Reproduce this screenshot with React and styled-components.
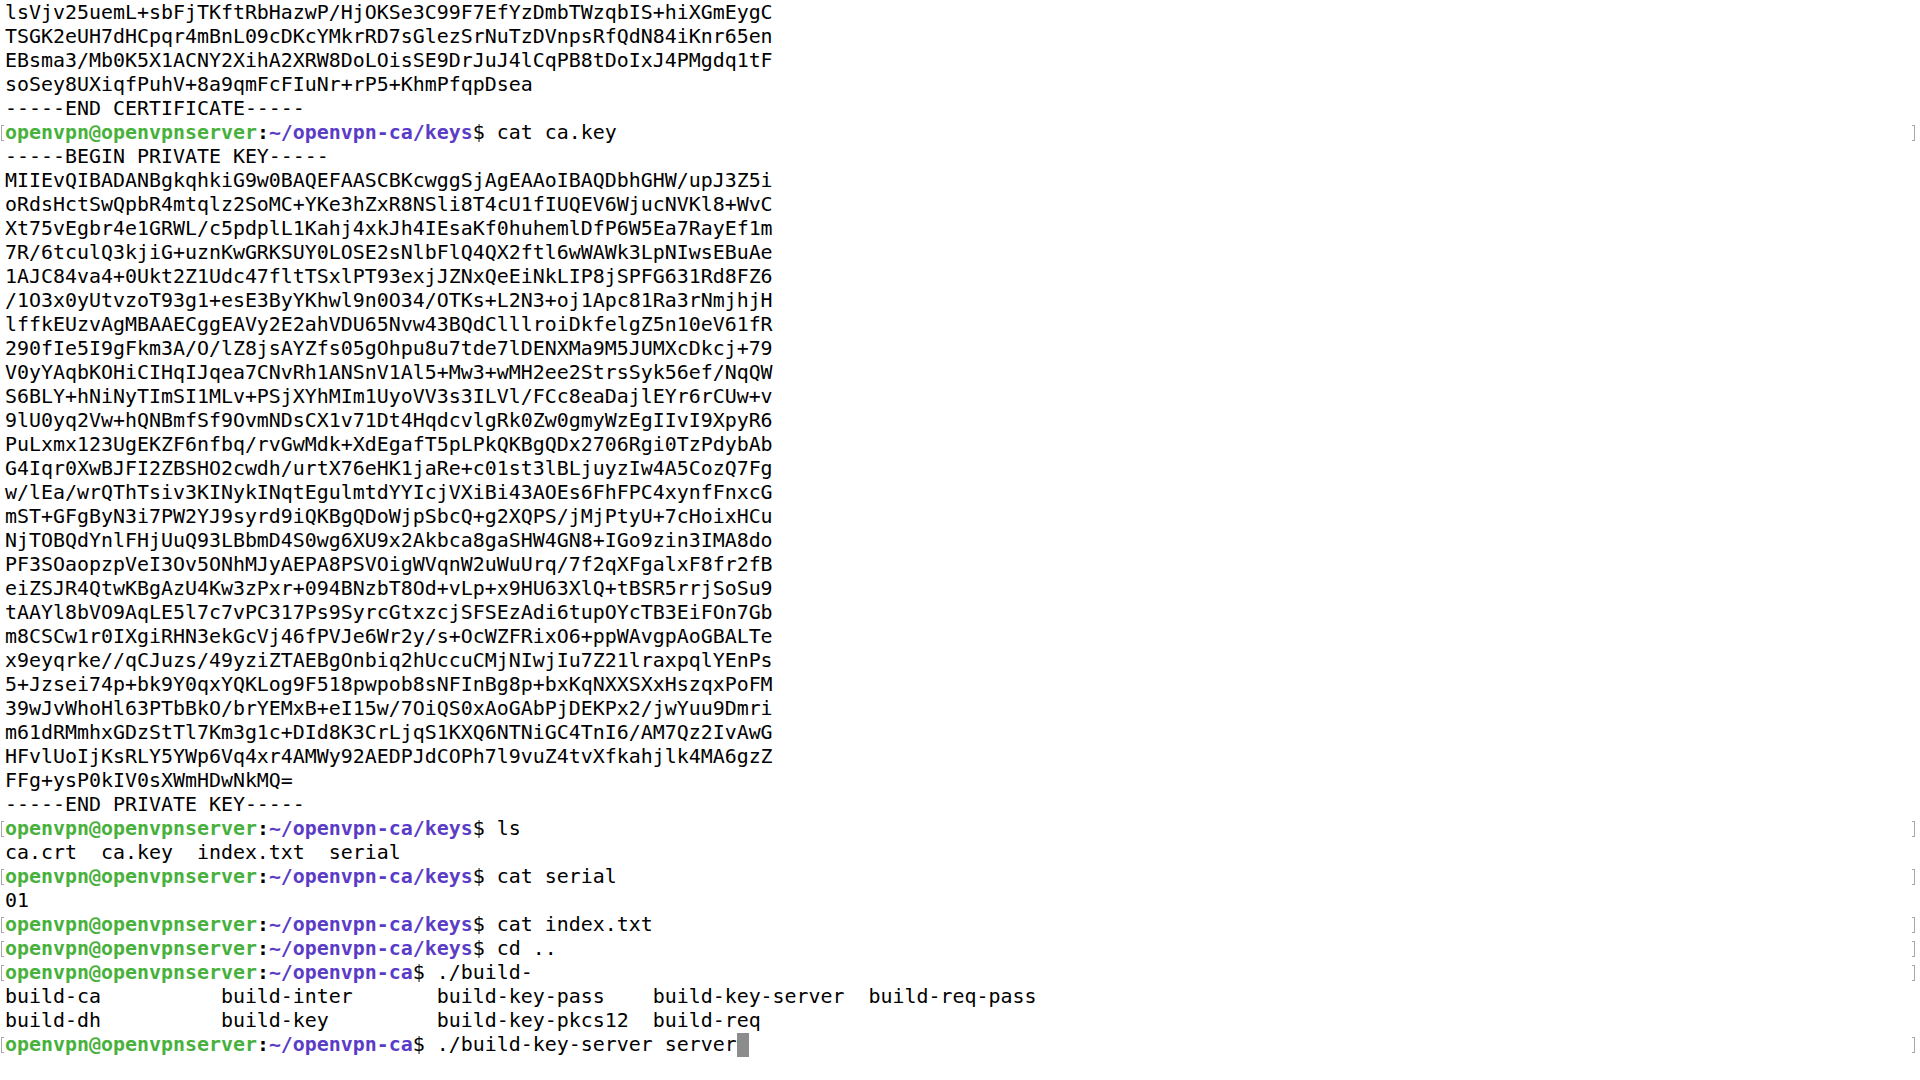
import React from "react";
import styled, { createGlobalStyle } from "styled-components";

const GlobalStyle = createGlobalStyle`
  html, body {
    margin: 0;
    background: #fff;
  }
`;

const Screen = styled.div`
  box-sizing: border-box;
  width: 100vw;
  height: 100vh;
  padding-top: 1px;
  overflow: hidden;
  background: #fff;
  color: #000;
  font-family: "DejaVu Sans Mono", "Liberation Mono", monospace;
  font-size: 19.93px;
  line-height: 24px;
`;

const Row = styled.div`
  position: relative;
  height: 24px;
  padding-left: 5px;
  white-space: pre;
`;

// iTerm-style gutter marks around prompt lines
const Mark = styled.span`
  position: absolute;
  top: 4px;
  ${(p) => (p.side === "left" ? "left: 1px;" : "right: 5px;")}
  box-sizing: border-box;
  width: 3px;
  height: 16px;
  border: 1px solid #a8a8a8;
  border-${(p) => (p.side === "left" ? "right" : "left")}: none;
`;

const User = styled.span`
  color: #47b13b;
  font-weight: bold;
`;

const Colon = styled.span`
  font-weight: bold;
`;

const Path = styled.span`
  color: #5a3cc6;
  font-weight: bold;
`;

const Cursor = styled.span`
  display: inline-block;
  width: 12px;
  height: 24px;
  vertical-align: top;
  background: #8c8c8c;
`;

const certTail = [
  "lsVjv25uemL+sbFjTKftRbHazwP/HjOKSe3C99F7EfYzDmbTWzqbIS+hiXGmEygC",
  "TSGK2eUH7dHCpqr4mBnL09cDKcYMkrRD7sGlezSrNuTzDVnpsRfQdN84iKnr65en",
  "EBsma3/Mb0K5X1ACNY2XihA2XRW8DoLOisSE9DrJuJ4lCqPB8tDoIxJ4PMgdq1tF",
  "soSey8UXiqfPuhV+8a9qmFcFIuNr+rP5+KhmPfqpDsea",
  "-----END CERTIFICATE-----",
];

const privateKey = [
  "-----BEGIN PRIVATE KEY-----",
  "MIIEvQIBADANBgkqhkiG9w0BAQEFAASCBKcwggSjAgEAAoIBAQDbhGHW/upJ3Z5i",
  "oRdsHctSwQpbR4mtqlz2SoMC+YKe3hZxR8NSli8T4cU1fIUQEV6WjucNVKl8+WvC",
  "Xt75vEgbr4e1GRWL/c5pdplL1Kahj4xkJh4IEsaKf0huhemlDfP6W5Ea7RayEf1m",
  "7R/6tculQ3kjiG+uznKwGRKSUY0LOSE2sNlbFlQ4QX2ftl6wWAWk3LpNIwsEBuAe",
  "1AJC84va4+0Ukt2Z1Udc47fltTSxlPT93exjJZNxQeEiNkLIP8jSPFG631Rd8FZ6",
  "/1O3x0yUtvzoT93g1+esE3ByYKhwl9n0O34/OTKs+L2N3+oj1Apc81Ra3rNmjhjH",
  "lffkEUzvAgMBAAECggEAVy2E2ahVDU65Nvw43BQdClllroiDkfelgZ5n10eV61fR",
  "290fIe5I9gFkm3A/O/lZ8jsAYZfs05gOhpu8u7tde7lDENXMa9M5JUMXcDkcj+79",
  "V0yYAqbKOHiCIHqIJqea7CNvRh1ANSnV1Al5+Mw3+wMH2ee2StrsSyk56ef/NqQW",
  "S6BLY+hNiNyTImSI1MLv+PSjXYhMIm1UyoVV3s3ILVl/FCc8eaDajlEYr6rCUw+v",
  "9lU0yq2Vw+hQNBmfSf9OvmNDsCX1v71Dt4HqdcvlgRk0Zw0gmyWzEgIIvI9XpyR6",
  "PuLxmx123UgEKZF6nfbq/rvGwMdk+XdEgafT5pLPkQKBgQDx2706Rgi0TzPdybAb",
  "G4Iqr0XwBJFI2ZBSHO2cwdh/urtX76eHK1jaRe+c01st3lBLjuyzIw4A5CozQ7Fg",
  "w/lEa/wrQThTsiv3KINykINqtEgulmtdYYIcjVXiBi43AOEs6FhFPC4xynfFnxcG",
  "mST+GFgByN3i7PW2YJ9syrd9iQKBgQDoWjpSbcQ+g2XQPS/jMjPtyU+7cHoixHCu",
  "NjTOBQdYnlFHjUuQ93LBbmD4S0wg6XU9x2Akbca8gaSHW4GN8+IGo9zin3IMA8do",
  "PF3SOaopzpVeI3Ov5ONhMJyAEPA8PSVOigWVqnW2uWuUrq/7f2qXFgalxF8fr2fB",
  "eiZSJR4QtwKBgAzU4Kw3zPxr+094BNzbT8Od+vLp+x9HU63XlQ+tBSR5rrjSoSu9",
  "tAAYl8bVO9AqLE5l7c7vPC317Ps9SyrcGtxzcjSFSEzAdi6tupOYcTB3EiFOn7Gb",
  "m8CSCw1r0IXgiRHN3ekGcVj46fPVJe6Wr2y/s+OcWZFRixO6+ppWAvgpAoGBALTe",
  "x9eyqrke//qCJuzs/49yziZTAEBgOnbiq2hUccuCMjNIwjIu7Z21lraxpqlYEnPs",
  "5+Jzsei74p+bk9Y0qxYQKLog9F518pwpob8sNFInBg8p+bxKqNXXSXxHszqxPoFM",
  "39wJvWhoHl63PTbBkO/brYEMxB+eI15w/7OiQS0xAoGAbPjDEKPx2/jwYuu9Dmri",
  "m61dRMmhxGDzStTl7Km3g1c+DId8K3CrLjqS1KXQ6NTNiGC4TnI6/AM7Qz2IvAwG",
  "HFvlUoIjKsRLY5YWp6Vq4xr4AMWy92AEDPJdCOPh7l9vuZ4tvXfkahjlk4MA6gzZ",
  "FFg+ysP0kIV0sXWmHDwNkMQ=",
  "-----END PRIVATE KEY-----",
];

const KEYS = "~/openvpn-ca/keys";
const CA = "~/openvpn-ca";

const pad = (cols) => cols.map((c) => c.padEnd(18, " ")).join("").trimEnd();

const session = [
  ...certTail.map((text) => ({ text })),
  { path: KEYS, cmd: "cat ca.key" },
  ...privateKey.map((text) => ({ text })),
  { path: KEYS, cmd: "ls" },
  { text: "ca.crt  ca.key  index.txt  serial" },
  { path: KEYS, cmd: "cat serial" },
  { text: "01" },
  { path: KEYS, cmd: "cat index.txt" },
  { path: KEYS, cmd: "cd .." },
  { path: CA, cmd: "./build-" },
  { text: pad(["build-ca", "build-inter", "build-key-pass", "build-key-server", "build-req-pass"]) },
  { text: pad(["build-dh", "build-key", "build-key-pkcs12", "build-req"]) },
  { path: CA, cmd: "./build-key-server server", cursor: true },
];

const PromptLine = ({ path, cmd, cursor }) => (
  <Row>
    <Mark side="left" />
    <User>openvpn@openvpnserver</User>
    <Colon>:</Colon>
    <Path>{path}</Path>
    {"$ " + cmd}
    {cursor && <Cursor />}
    <Mark side="right" />
  </Row>
);

const App = () => (
  <>
    <GlobalStyle />
    <Screen>
      {session.map((line, i) =>
        line.path ? (
          <PromptLine key={i} {...line} />
        ) : (
          <Row key={i}>{line.text}</Row>
        )
      )}
    </Screen>
  </>
);

export default App;
